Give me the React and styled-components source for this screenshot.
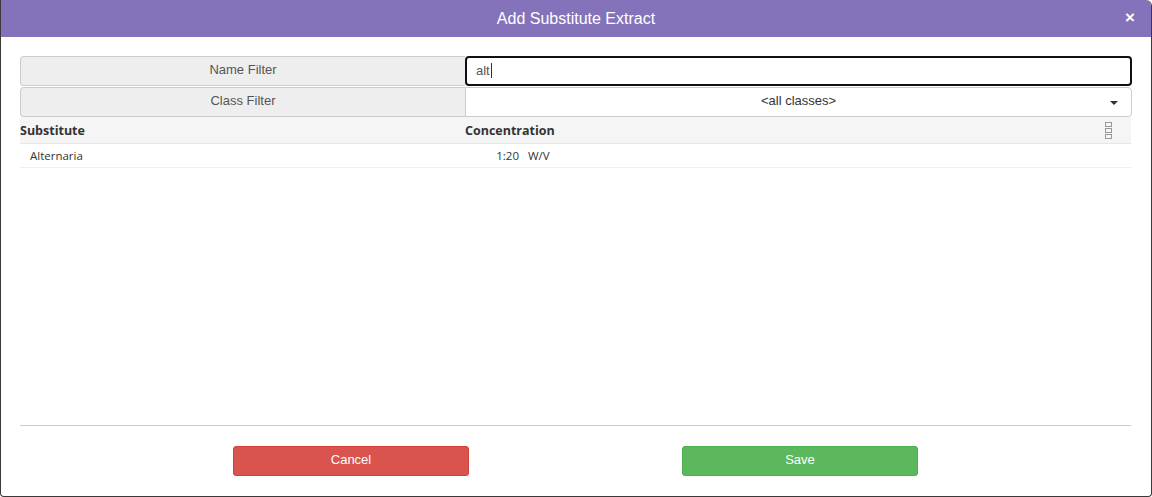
import React from 'react';
import styled, { createGlobalStyle } from 'styled-components';

const GlobalStyle = createGlobalStyle`
  html, body {
    margin: 0;
    padding: 0;
    background: #fff;
  }
  * {
    box-sizing: border-box;
  }
`;

const Modal = styled.div`
  width: 1152px;
  height: 497px;
  display: flex;
  flex-direction: column;
  border: 1px solid #3a3a3a;
  border-top: none;
  border-radius: 0 6px 4px 4px;
  overflow: hidden;
  background: #fff;
  font-family: 'Liberation Sans', Arial, sans-serif;
`;

const Header = styled.div`
  height: 37px;
  flex: none;
  background: #8473ba;
  display: flex;
  align-items: center;
  justify-content: center;
  position: relative;
  color: #fff;
  font-size: 16px;
`;

const Close = styled.span`
  position: absolute;
  right: 16px;
  top: 9px;
  font-size: 17px;
  font-weight: bold;
  line-height: 18px;
`;

const Body = styled.div`
  flex: 1;
  display: flex;
  flex-direction: column;
  padding: 19px 19px 0 19px;
`;

const FilterGrid = styled.div`
  display: grid;
  grid-template-columns: 445px 1fr;
  grid-auto-rows: 30px;
  row-gap: 1px;
`;

const Label = styled.div`
  background: #eee;
  border: 1px solid #ccc;
  border-right: none;
  border-radius: 4px 0 0 4px;
  color: #555;
  font-size: 13px;
  display: flex;
  align-items: center;
  justify-content: center;
  padding-bottom: 3px;
`;

const TextInput = styled.div`
  border: 2px solid #111;
  border-radius: 4px;
  background: #fff;
  font-size: 13px;
  color: #555;
  display: flex;
  align-items: center;
  padding: 0 0 2px 9px;
`;

const Caret = styled.span`
  display: inline-block;
  width: 1px;
  height: 15px;
  background: #333;
  margin-left: 1px;
`;

const Select = styled.div`
  border: 1px solid #ccc;
  border-radius: 0 4px 4px 0;
  background: #fff;
  font-size: 13px;
  color: #333;
  display: flex;
  align-items: center;
  justify-content: center;
  position: relative;
  padding-bottom: 3px;
`;

const SelectArrow = styled.span`
  position: absolute;
  right: 13px;
  top: 13px;
  width: 0;
  height: 0;
  border-left: 4px solid transparent;
  border-right: 4px solid transparent;
  border-top: 4px solid #333;
`;

const TableHead = styled.div`
  display: grid;
  grid-template-columns: 445px 1fr 30px;
  height: 27px;
  align-items: center;
  background: #f5f5f5;
  border-bottom: 1px solid #e6e6e6;
  font-family: 'Open Sans', sans-serif;
  font-weight: bold;
  font-size: 12.5px;
  color: #333;
  margin-right: 1px;
`;

const MenuIcon = styled.svg`
  justify-self: end;
  margin-right: 19px;
`;

const TableRow = styled.div`
  display: grid;
  grid-template-columns: 445px 54px 1fr;
  height: 24px;
  align-items: center;
  border-bottom: 1px solid #eee;
  font-family: 'Open Sans', sans-serif;
  font-size: 11.5px;
  color: #333;
  margin-right: 1px;
`;

const Cell = styled.div`
  padding-left: ${(p) => p.$pad || 0}px;
  text-align: ${(p) => p.$align || 'left'};
`;

const Spacer = styled.div`
  flex: 1;
`;

const Divider = styled.hr`
  margin: 0 1px 0 0;
  border: none;
  border-top: 1px solid #ccc;
`;

const Footer = styled.div`
  display: flex;
  gap: 213px;
  padding: 20px 0 20px 213px;
`;

const Button = styled.button`
  width: 236px;
  height: 30px;
  padding: 0 0 3px;
  border-radius: 3px;
  border: 1px solid ${(p) => (p.$variant === 'danger' ? '#d43f3a' : '#4cae4c')};
  background: ${(p) => (p.$variant === 'danger' ? '#d9534f' : '#5cb85c')};
  color: #fff;
  font-family: 'Liberation Sans', Arial, sans-serif;
  font-size: 13px;
  cursor: pointer;
`;

const App = () => {
  return (
    <>
      <GlobalStyle />
      <Modal>
        <Header>
          Add Substitute Extract
          <Close>×</Close>
        </Header>
        <Body>
          <FilterGrid>
            <Label>Name Filter</Label>
            <TextInput>
              alt<Caret />
            </TextInput>
            <Label>Class Filter</Label>
            <Select>
              &lt;all classes&gt;
              <SelectArrow />
            </Select>
          </FilterGrid>
          <TableHead>
            <Cell>Substitute</Cell>
            <Cell>Concentration</Cell>
            <MenuIcon width="7" height="17" viewBox="0 0 7 17">
              <rect x="0.5" y="0.5" width="6" height="4" fill="none" stroke="#999" />
              <rect x="0.5" y="6.5" width="6" height="4" fill="none" stroke="#999" />
              <rect x="0.5" y="12.5" width="6" height="4" fill="none" stroke="#999" />
            </MenuIcon>
          </TableHead>
          <TableRow>
            <Cell $pad={10}>Alternaria</Cell>
            <Cell $align="right">1:20</Cell>
            <Cell $pad={9}>W/V</Cell>
          </TableRow>
          <Spacer />
          <Divider />
          <Footer>
            <Button $variant="danger">Cancel</Button>
            <Button $variant="success">Save</Button>
          </Footer>
        </Body>
      </Modal>
    </>
  );
};

export default App;
